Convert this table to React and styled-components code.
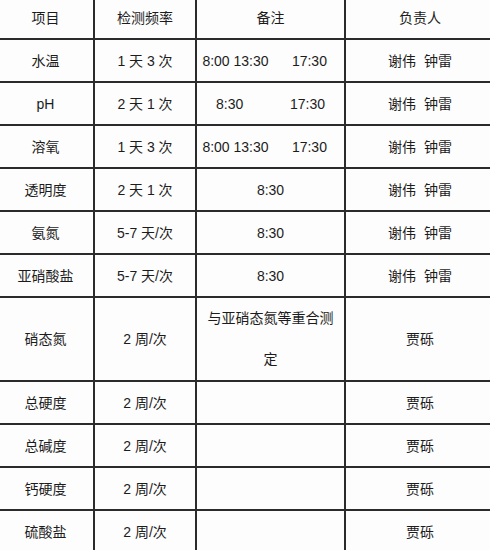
import React from "react";
import styled, { createGlobalStyle } from "styled-components";

const Global = createGlobalStyle`
  html, body { margin: 0; padding: 0; background: #fff; overflow: hidden; }
  body { font-family: "Liberation Sans", "Noto Sans CJK SC", sans-serif; }
`;

const Page = styled.div`
  width: 490px;
  height: 550px;
  overflow: hidden;
  background: #fdfdfd;
`;

const Table = styled.table`
  border-collapse: collapse;
  table-layout: fixed;
  margin: -5px 0 0 -4px;
  width: 498px;
  color: #1c1c1c;
  font-size: 14px;
`;

const Cell = styled.td`
  border: 2px solid #2b2b2b;
  height: ${(p) => p.$h || 41}px;
  padding: 0 ${(p) => (p.$pad != null ? p.$pad : 6)}px;
  text-align: center;
  vertical-align: middle;
  white-space: ${(p) => (p.$pre ? "pre" : "normal")};
  line-height: ${(p) => p.$lh || 20}px;
  word-break: break-all;
`;

const HeadCell = styled(Cell).attrs({ as: "th" })`
  font-weight: normal;
`;

const rows = [
  ["水温", "1 天 3 次", "8:00 13:30      17:30   ", "谢伟  钟雷"],
  ["pH", "2 天 1 次", "8:30            17:30", "谢伟  钟雷"],
  ["溶氧", "1 天 3 次", "8:00 13:30      17:30   ", "谢伟  钟雷"],
  ["透明度", "2 天 1 次", "8:30", "谢伟  钟雷"],
  ["氨氮", "5-7 天/次", "8:30", "谢伟  钟雷"],
  ["亚硝酸盐", "5-7 天/次", "8:30", "谢伟  钟雷"],
];

const lower = ["总硬度", "总碱度", "钙硬度", "硫酸盐"];

export default function App() {
  return (
    <Page>
      <Global />
      <Table>
        <colgroup>
          <col style={{ width: 97 }} />
          <col style={{ width: 102 }} />
          <col style={{ width: 149 }} />
          <col style={{ width: 150 }} />
        </colgroup>
        <thead>
          <tr>
            <HeadCell>项目</HeadCell>
            <HeadCell>检测频率</HeadCell>
            <HeadCell>备注</HeadCell>
            <HeadCell>负责人</HeadCell>
          </tr>
        </thead>
        <tbody>
          {rows.map((r) => (
            <tr key={r[0]}>
              <Cell>{r[0]}</Cell>
              <Cell $pre>{r[1]}</Cell>
              <Cell $pre $pad={0}>{r[2]}</Cell>
              <Cell $pre>{r[3]}</Cell>
            </tr>
          ))}
          <tr>
            <Cell $h={82}>硝态氮</Cell>
            <Cell $h={82} $pre>2 周/次</Cell>
            <Cell $h={82} $lh={41}>与亚硝态氮等重合测定</Cell>
            <Cell $h={82}>贾砾</Cell>
          </tr>
          {lower.map((n) => (
            <tr key={n}>
              <Cell>{n}</Cell>
              <Cell $pre>2 周/次</Cell>
              <Cell />
              <Cell>贾砾</Cell>
            </tr>
          ))}
        </tbody>
      </Table>
    </Page>
  );
}
